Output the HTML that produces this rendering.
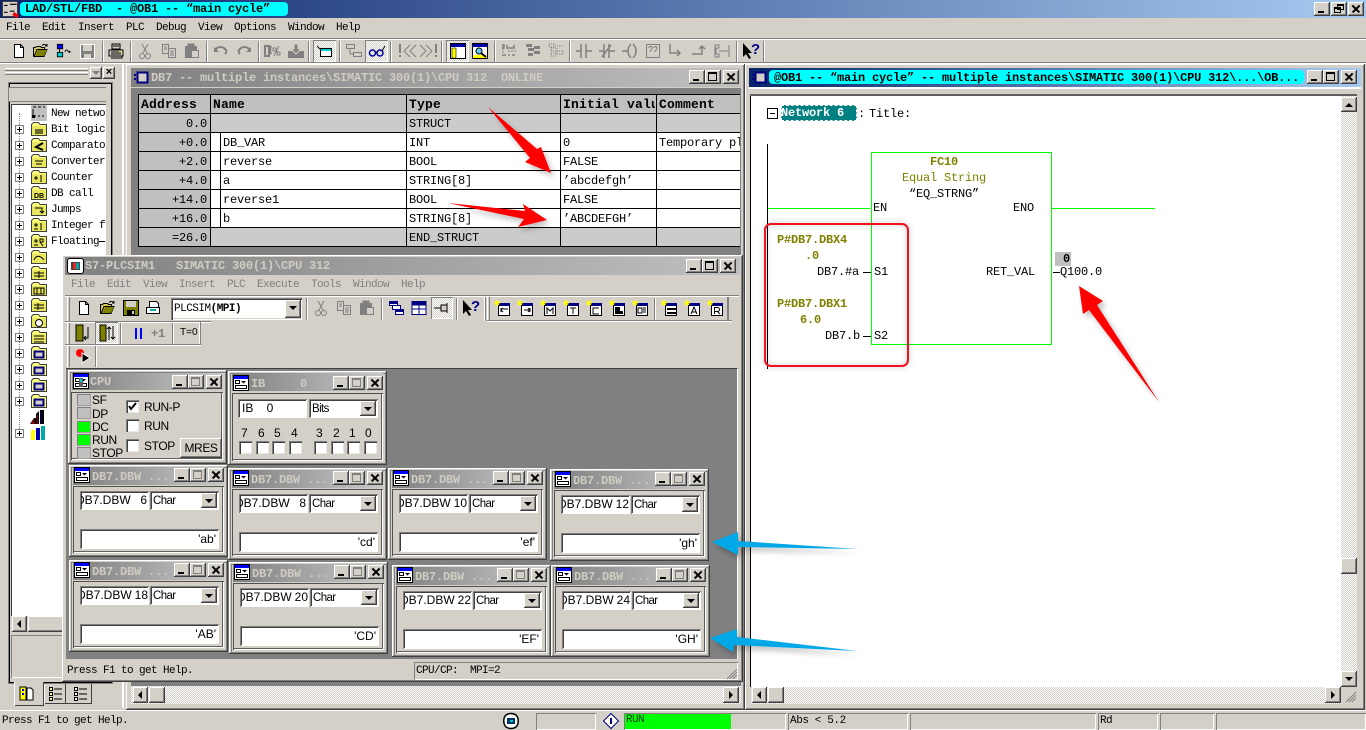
<!DOCTYPE html>
<html><head><meta charset="utf-8"><title>LAD/STL/FBD</title>
<style>
html,body{margin:0;padding:0}
body{width:1366px;height:730px;position:relative;overflow:hidden;background:#d4d0c8;font:12px "Liberation Mono",monospace;color:#000}
div,span,i,b,svg{position:absolute;display:block;box-sizing:border-box;font-style:normal}
.m{font:11px "Liberation Mono",monospace;letter-spacing:-.6px;white-space:pre;line-height:14px}
.n{font:12px "Liberation Mono",monospace;letter-spacing:-.2px;white-space:pre;line-height:14px}
.h{font:bold 13px "Liberation Mono",monospace;letter-spacing:.2px;white-space:pre;line-height:16px}
.bt{font:bold 12px "Liberation Mono",monospace;letter-spacing:-.2px;white-space:pre;line-height:14px}
.ar{font:12px "Liberation Sans",sans-serif;white-space:pre;line-height:14px}
.ol{color:#808000}
.r{box-shadow:inset -1px -1px #404040,inset 1px 1px #fff,inset -2px -2px #808080;background:#d4d0c8}
.s{box-shadow:inset 1px 1px #808080,inset 2px 2px #404040,inset -1px -1px #fff,inset -2px -2px #d4d0c8;background:#fff}
.f{box-shadow:inset 1px 1px #808080,inset -1px -1px #fff,inset 2px 2px #404040}
.d{background:repeating-conic-gradient(#fff 0 25%,#d4d0c8 0 50%) 0 0/2px 2px}
.b{width:16px;height:14px;background:#d4d0c8;box-shadow:inset -1px -1px #404040,inset 1px 1px #fff,inset -2px -2px #808080}
.mn:after{content:"";position:absolute;left:4px;top:9px;width:6px;height:2px;background:#000}
.mx:after{content:"";position:absolute;left:3px;top:2px;width:9px;height:9px;border:1px solid #000;border-top-width:2px;box-sizing:border-box}
.mg:after{content:"";position:absolute;left:3px;top:2px;width:9px;height:9px;border:1px solid #808080;border-top-width:2px;box-sizing:border-box}
.cl:before,.cl:after{content:"";position:absolute;left:3px;top:6px;width:10px;height:1.6px;background:#000;transform:rotate(45deg)}
.cl:after{transform:rotate(-45deg)}
.up:after,.dn:after,.lf:after,.rt:after{content:"";position:absolute;width:0;height:0;border:4px solid transparent}
.up:after{left:4px;top:2px;border-bottom-color:#000}
.dn:after{left:4px;top:6px;border-top-color:#000}
.lf:after{left:1px;top:4px;border-right-color:#000}
.rt:after{left:6px;top:4px;border-left-color:#000}
.vl{width:1px;background:#000}.hl{height:1px;background:#000}
.gr{background:#c0c0c0}.lg{background:#cbcbcb}
.sep{width:2px;height:22px;background:linear-gradient(90deg,#808080 50%,#fff 50%)}
.i{width:16px;height:16px;overflow:visible}
.plus{width:9px;height:9px;border:1px solid #808080;background:#fff;left:15px}
.plus:after{content:"";position:absolute;left:1px;top:3px;width:5px;height:1px;background:#000}
.plus:before{content:"";position:absolute;left:3px;top:1px;width:1px;height:5px;background:#000}
.w{width:159px;height:92px;background:#d4d0c8;box-shadow:inset -1px -1px #404040,inset 1px 1px #fff,inset -2px -2px #808080,inset 2px 2px #d4d0c8,inset 3px 3px #808080}
.w .tb{left:4px;top:2px;width:151px;height:18px;background:linear-gradient(90deg,#808080,#c8c8c8)}
.w .tt{left:23px;top:5px;color:#d0ccc4}
.w .cli{left:4px;top:21px;width:151px;height:67px;box-shadow:inset 1px 1px #505050,inset -1px -1px #fff,inset -2px -2px #606060}
.w .a{left:11px;top:26px;width:69px;height:19px;overflow:hidden}
.w .c{left:81px;top:26px;width:69px;height:19px}
.w .v{left:11px;top:64px;width:139px;height:20px}
.a .ar{top:2px!important}
.a .ar:first-child{clip-path:inset(0 0 0 5px)}
.c .ar,.ch{font-size:11.5px;letter-spacing:-.6px;top:3px}
.cb{width:16px;height:15px;right:2px;top:2px}
.cb:after{content:"";position:absolute;left:4px;top:6px;border:4px solid transparent;border-top-color:#000}
.led{left:9px;width:14px;height:12px;background:#c0c0c0;border:1px solid #808080;border-right-color:#a0a0a0;border-bottom-color:#a0a0a0}
.lb{letter-spacing:-.4px}
.ck2{width:13px;height:13px;background:#fff;box-shadow:inset 1px 1px #808080,inset 2px 2px #404040,inset -1px -1px #e8e8e8}
</style></head><body>

<svg width="0" height="0" style="position:absolute">
<defs>
<symbol id="new" viewBox="0 0 16 16"><path d="M3.500 1.500h6l3 3v10h-9z" fill="#fff" stroke="#000"/><path d="M9.500 1.500v3h3" fill="none" stroke="#000"/></symbol>
<symbol id="open" viewBox="0 0 16 16"><path d="M.5 13.500v-9h2l1-1h4l1 1h3v2H4l-3 7h10l3-7H4" fill="#d8c860" stroke="#000"/><path d="M2 13l3-6h9l-3 6z" fill="#808000"/><path d="M9 2.500c1.500-1.500 3.500-1.500 5 .5m0-2v2h-2" fill="none" stroke="#000"/></symbol>
<symbol id="sv" viewBox="0 0 16 16"><path d="M.5.500h15v15h-15z" fill="#808000" stroke="#000"/><path d="M3 1h10v6H3z" fill="#d4d0c8"/><path d="M4 10h8v5H4z" fill="#000"/><path d="M9 11h2v3H9z" fill="#d4d0c8"/></symbol>
<symbol id="svg" viewBox="0 0 16 16"><path d="M.5.500h14v14h-14z" fill="#808080" stroke="#fff"/><path d="M3 1h9v6H3z" fill="#d4d0c8"/><path d="M4 10h7v4H4z" fill="#d4d0c8"/></symbol>
<symbol id="pr" viewBox="0 0 16 16"><path d="M4 1h8v5H4zM1 7h14v6H1z" fill="#d4d0c8" stroke="#000"/><path d="M3 9h10M3 11h10M5 3h6M4 13h10v2H3" fill="none" stroke="#000"/><path d="M11 8h2v1h-2z" fill="#ff0"/></symbol>
<symbol id="cut" viewBox="0 0 16 16"><path d="M5 1l5 9M11 1L6 10" stroke="#808080" fill="none"/><circle cx="5" cy="13" r="2.500" fill="none" stroke="#808080"/><circle cx="11" cy="13" r="2.500" fill="none" stroke="#808080"/></symbol>
<symbol id="cp" viewBox="0 0 16 16"><path d="M1.500 1.500h6v9h-6zM7.500 5.500h7v9h-7z" fill="#d4d0c8" stroke="#808080"/><path d="M3 4h3M3 6h3M9 8h4M9 10h4M9 12h4" stroke="#808080"/></symbol>
<symbol id="pa" viewBox="0 0 16 16"><path d="M1.500 3.500h11v11h-11z" fill="#808080" stroke="#808080"/><path d="M4 1h6v4H4z" fill="#808080" stroke="#808080"/><path d="M7.500 7.500h7v7h-7z" fill="#d4d0c8" stroke="#808080"/></symbol>
<symbol id="und" viewBox="0 0 16 16"><path d="M2 7c3-4 8-4 11 0 1 2 0 3-1 4" fill="none" stroke="#808080" stroke-width="2"/><path d="M1 4v5h5z" fill="#808080"/></symbol>
<symbol id="red" viewBox="0 0 16 16"><path d="M14 7c-3-4-8-4-11 0-1 2 0 3 1 4" fill="none" stroke="#808080" stroke-width="2"/><path d="M15 4v5h-5z" fill="#808080"/></symbol>
<symbol id="gm" viewBox="0 0 18 16"><path d="M1 3h4v10H1zM7 3c-2 4 0 8 0 8" fill="none" stroke="#808080" stroke-width="2"/><path d="M9 5h3v3H9zM13 9h3v3h-3zM15 3l-5 10" fill="none" stroke="#808080"/></symbol>
<symbol id="dl" viewBox="0 0 18 16"><path d="M1 8h16v7H1z" fill="#808080"/><path d="M7 1h4v5h3l-5 5-5-5h3z" fill="#808080" stroke="#d4d0c8"/></symbol>
<symbol id="mon" viewBox="0 0 16 14"><path d="M3.500 3.500h11v8h-11z" fill="#fff" stroke="#000"/><path d="M4 4h10v2H4z" fill="#0cc"/><path d="M0 1l4 4" stroke="#000"/></symbol>
<symbol id="netw" viewBox="0 0 18 16"><path d="M1.500 1.500h8v4h-8zM8.500 9.500h8v4h-8z" fill="#d4d0c8" stroke="#808080"/><path d="M5 6v5h3" stroke="#808080" fill="none"/></symbol>
<symbol id="gl" viewBox="0 0 18 16"><circle cx="4.500" cy="10" r="3" fill="none" stroke="#00a" stroke-width="1.500"/><circle cx="12" cy="10" r="3" fill="none" stroke="#00a" stroke-width="1.500"/><path d="M7 9h2.500M14 8l3-5" stroke="#000"/></symbol>
<symbol id="ex1" viewBox="0 0 20 16"><path d="M3 1v9M3 12v2" stroke="#808080" stroke-width="2"/><path d="M13 2L7 8l6 6M19 2l-6 6 6 6" fill="none" stroke="#808080"/></symbol>
<symbol id="ex2" viewBox="0 0 20 16"><path d="M17 1v9M17 12v2" stroke="#808080" stroke-width="2"/><path d="M7 2l6 6-6 6M1 2l6 6-6 6" fill="none" stroke="#808080"/></symbol>
<symbol id="pane" viewBox="0 0 16 16"><path d="M.5.500h15v15h-15z" fill="#fff" stroke="#000"/><path d="M1 1h14v3H1z" fill="#00a"/><path d="M2 5h4v10H2z" fill="#ff0" stroke="#000" stroke-width=".6"/></symbol>
<symbol id="zoomw" viewBox="0 0 16 16"><path d="M.5.500h15v15h-15z" fill="#fff" stroke="#000"/><path d="M1 1h14v3H1z" fill="#00a"/><path d="M1 12h14v3H1z" fill="#ff0"/><circle cx="7" cy="8" r="3" fill="#6cf" stroke="#000"/><path d="M9 10l5 4" stroke="#000" stroke-width="2"/></symbol>
<symbol id="q1" viewBox="0 0 16 16"><path d="M0 2h2v3H0zM5 2v3h7V2M0 12h4M6 12h2M10 12h3" stroke="#808080" fill="none" stroke-width="1.500"/><path d="M1 5v6M6 8h8" stroke="#808080" stroke-dasharray="2 1"/></symbol>
<symbol id="q2" viewBox="0 0 16 16"><path d="M1 1h6v3H1zM9 3h6v3H9zM9 8h6v3H9zM3 5h6v3H3zM3 10h5v3H3z" fill="#808080"/></symbol>
<symbol id="q3" viewBox="0 0 16 16"><path d="M1 1h6v3H1zM9 3h6M9 8h6v3H9zM3 5h6v3H3zM3 10h5v3H3z" fill="none" stroke="#808080" stroke-dasharray="1 1"/></symbol>
<symbol id="no" viewBox="0 0 16 16"><path d="M0 8h5M5 1v14M10 1v14M10 8h6" stroke="#808080" stroke-width="1.500" fill="none"/></symbol>
<symbol id="nc" viewBox="0 0 16 16"><path d="M0 8h5M5 1v14M10 1v14M10 8h6M3 14L12 2" stroke="#808080" stroke-width="1.500" fill="none"/></symbol>
<symbol id="co" viewBox="0 0 16 16"><path d="M0 8h6M9 1c-4 4-4 10 0 14M11 1c4 4 4 10 0 14" stroke="#808080" stroke-width="1.500" fill="none"/></symbol>
<symbol id="bx" viewBox="0 0 16 16"><path d="M1.500 1.500h13v13h-13z" fill="none" stroke="#808080"/><path d="M4 5c0-2 3-2 3 0s-2 2-2 4M9 5c0-2 3-2 3 0s-2 2-2 4" fill="none" stroke="#808080"/></symbol>
<symbol id="brd" viewBox="0 0 16 16"><path d="M2 1v9h10M9 7l3 3-3 3" fill="none" stroke="#808080" stroke-width="1.500"/></symbol>
<symbol id="bru" viewBox="0 0 16 16"><path d="M1 11h10V3M8 6l3-3 3 3" fill="none" stroke="#808080" stroke-width="1.500"/></symbol>
<symbol id="brc" viewBox="0 0 16 16"><path d="M1 2h4v3H2v6h3v3H1zM15 2v12M5 8h10" fill="none" stroke="#808080"/></symbol>
<symbol id="hlp" viewBox="0 0 18 16"><path d="M1 0v14l3-3 3 5 2-1-3-5h4z" fill="#000"/><text x="9" y="11" font-family="Liberation Sans" font-weight="bold" font-size="15" fill="#00008b">?</text></symbol>
<symbol id="fold" viewBox="0 0 16 16"><path d="M.5 14.500v-11l2-2h5l1.500 2h6.500v11z" fill="#ffff80" stroke="#404040"/><path d="M1 5h14v9H1z" fill="#e8e860"/></symbol>
<symbol id="blk" viewBox="0 0 16 16"><path d="M.5 14.500v-11l2-2h5l1.500 2h6.500v11z" fill="#ffff80" stroke="#404040"/><path d="M3.500 6.500h9v6h-9z" fill="#d4d0c8" stroke="#000080" stroke-width="2"/></symbol>
<symbol id="mini" viewBox="0 0 16 16"><path d="M.5.500h15v15H.5z" fill="#fff" stroke="#000"/><path d="M1 1h14v3H1z" fill="#00f"/><path d="M2.500 5.500h4v3h-4zM2.500 10.500h11v3h-11z" fill="#fff" stroke="#000"/><path d="M8 6h5l-2.500 2.500z" fill="#000"/></symbol>
<symbol id="nw" viewBox="0 0 16 16"><path d="M4.500 3.500h11v12h-11z" fill="#fff" stroke="#000"/><path d="M5 3h11v3H5z" fill="#000080"/><path d="M3 0v6M0 3h6M1 1l4 4M5 1L1 5" stroke="#ff0"/></symbol>
</defs>
</svg>

<!-- main title -->
<div style="left:0;top:0;width:1366px;height:18px;background:linear-gradient(90deg,#0a246a,#a6caf0)"></div>
<div style="left:2px;top:1px;width:16px;height:16px;background:#d4d0c8;border:1px solid #404040"><svg class="i" style="left:0;top:0" width="14" height="14" viewBox="0 0 14 14"><path d="M1 3h3M1 9h3M6 2h6M6 8h4" stroke="#000" fill="none"/><path d="M9 10l4 3" stroke="#e00" stroke-width="3"/></svg></div>
<div style="left:20px;top:2px;width:268px;height:14px;background:#0ff;border-radius:4px"></div>
<div class="bt" style="left:25px;top:2px">LAD/STL/FBD  - @OB1 -- “main cycle”</div>
<div class="b mn" style="left:1314px;top:2px"></div>
<div class="b" style="left:1331px;top:2px"><span style="left:3px;top:5px;width:7px;height:6px;border:1px solid #000;border-top-width:2px;background:#d4d0c8"></span><span style="left:6px;top:2px;width:7px;height:6px;border:1px solid #000;border-top-width:2px"></span></div>
<div class="b cl" style="left:1348px;top:2px"></div>

<!-- menu -->
<div class="m" style="left:6px;top:21px">File</div>
<div class="m" style="left:42px;top:21px">Edit</div>
<div class="m" style="left:78px;top:21px">Insert</div>
<div class="m" style="left:126px;top:21px">PLC</div>
<div class="m" style="left:156px;top:21px">Debug</div>
<div class="m" style="left:198px;top:21px">View</div>
<div class="m" style="left:234px;top:21px">Options</div>
<div class="m" style="left:288px;top:21px">Window</div>
<div class="m" style="left:336px;top:21px">Help</div>
<div style="left:0;top:38px;width:1366px;height:2px;background:linear-gradient(#808080 50%,#fff 50%)"></div>

<!-- main toolbar -->
<svg class="i" style="left:11px;top:43px"><use href="#new"/></svg>
<svg class="i" style="left:33px;top:43px"><use href="#open"/></svg>
<svg class="i" style="left:56px;top:43px" viewBox="0 0 18 16"><path d="M1.500.500h6v5h-6z" fill="#00f" stroke="#000"/><path d="M1.500 9.500h6v5h-6z" fill="#0cc" stroke="#000"/><path d="M4 6v3M10 9c1-3 3-3 4 0l2 0m-1-1l1 1-1 1" fill="none" stroke="#000"/></svg>
<svg class="i" style="left:80px;top:44px"><use href="#svg"/></svg>
<div class="sep" style="left:102px;top:41px"></div>
<svg class="i" style="left:108px;top:43px"><use href="#pr"/></svg>
<div class="sep" style="left:130px;top:41px"></div>
<svg class="i" style="left:137px;top:43px"><use href="#cut"/></svg>
<svg class="i" style="left:161px;top:43px"><use href="#cp"/></svg>
<svg class="i" style="left:184px;top:43px"><use href="#pa"/></svg>
<div class="sep" style="left:206px;top:41px"></div>
<svg class="i" style="left:213px;top:43px"><use href="#und"/></svg>
<svg class="i" style="left:236px;top:43px"><use href="#red"/></svg>
<div class="sep" style="left:258px;top:41px"></div>
<svg class="i" style="left:264px;top:43px;width:18px"><use href="#gm"/></svg>
<svg class="i" style="left:287px;top:43px;width:18px"><use href="#dl"/></svg>
<div class="sep" style="left:308px;top:41px"></div>
<div class="d" style="left:313px;top:40px;width:23px;height:22px;box-shadow:inset 1px 1px #808080,inset -1px -1px #fff"></div>
<svg class="i" style="left:317px;top:44px"><use href="#mon"/></svg>
<div class="sep" style="left:339px;top:41px"></div>
<svg class="i" style="left:345px;top:43px;width:18px"><use href="#netw"/></svg>
<div class="d" style="left:365px;top:40px;width:23px;height:22px;box-shadow:inset 1px 1px #808080,inset -1px -1px #fff"></div>
<svg class="i" style="left:368px;top:43px;width:18px"><use href="#gl"/></svg>
<div class="sep" style="left:390px;top:41px"></div>
<svg class="i" style="left:397px;top:43px;width:20px"><use href="#ex1"/></svg>
<svg class="i" style="left:419px;top:43px;width:20px"><use href="#ex2"/></svg>
<div class="sep" style="left:441px;top:41px"></div>
<div class="d" style="left:446px;top:40px;width:23px;height:22px;box-shadow:inset 1px 1px #808080,inset -1px -1px #fff"></div>
<svg class="i" style="left:450px;top:43px"><use href="#pane"/></svg>
<svg class="i" style="left:472px;top:43px"><use href="#zoomw"/></svg>
<div class="sep" style="left:494px;top:41px"></div>
<svg class="i" style="left:502px;top:43px"><use href="#q1"/></svg>
<svg class="i" style="left:525px;top:43px"><use href="#q2"/></svg>
<svg class="i" style="left:548px;top:43px"><use href="#q3"/></svg>
<div class="sep" style="left:569px;top:41px"></div>
<svg class="i" style="left:576px;top:43px"><use href="#no"/></svg>
<svg class="i" style="left:599px;top:43px"><use href="#nc"/></svg>
<svg class="i" style="left:622px;top:43px"><use href="#co"/></svg>
<svg class="i" style="left:645px;top:43px"><use href="#bx"/></svg>
<svg class="i" style="left:668px;top:43px"><use href="#brd"/></svg>
<svg class="i" style="left:691px;top:43px"><use href="#bru"/></svg>
<svg class="i" style="left:714px;top:43px"><use href="#brc"/></svg>
<div class="sep" style="left:736px;top:41px"></div>
<svg class="i" style="left:742px;top:43px;width:18px"><use href="#hlp"/></svg>
<div class="sep" style="left:763px;top:41px"></div>
<div style="left:0;top:62px;width:1366px;height:2px;background:linear-gradient(#808080 50%,#fff 50%)"></div>

<!-- left dock -->
<div style="left:5px;top:68px;width:83px;height:3px;box-shadow:inset 0 1px #fff,inset 0 -1px #808080"></div>
<div style="left:5px;top:72px;width:83px;height:3px;box-shadow:inset 0 1px #fff,inset 0 -1px #808080"></div>
<div class="r" style="left:90px;top:67px;width:12px;height:12px"><span style="left:2px;top:4px;border:4px solid transparent;border-top-color:#808080"></span></div>
<div class="r" style="left:103px;top:67px;width:12px;height:12px;font:bold 11px 'Liberation Sans';line-height:11px;text-align:center">×</div>
<div style="left:8px;top:82px;width:105px;height:602px;border:1px solid #808080;box-shadow:inset 1px 1px #000,inset -1px -1px #000"></div>
<div style="left:9px;top:87px;width:97px;height:15px;background:#d4d0c8;border-top:1px solid #808080;border-bottom:1px solid #808080"></div>
<div style="left:11px;top:104px;width:95px;height:512px;background:#fff;border-left:1px solid #404040;border-top:1px solid #404040"></div>
<div style="left:13px;top:105px;width:92px;height:344px;overflow:hidden">
<div style="left:0;top:8px;width:92px;height:336px">
<div style="left:6px;top:0;width:1px;height:322px;border-left:1px dotted #808080"></div>
<svg class="i" style="left:18px;top:-8px"><path d="M0 0h16v16H0z" fill="#c0c0c0"/><path d="M2 2h3M7 2h3M12 2h2M2 4v6M2 11h3M7 11h2M11 11h2" stroke="#000"/><path d="M1 10h3v3H1z"/></svg>
<div class="m" style="left:38px;top:-6px">New netwo</div>
<div class="m" style="left:38px;top:10px">Bit logic</div>
<div class="m" style="left:38px;top:26px">Comparato</div>
<div class="m" style="left:38px;top:42px">Converter</div>
<div class="m" style="left:38px;top:58px">Counter</div>
<div class="m" style="left:38px;top:74px">DB call</div>
<div class="m" style="left:38px;top:90px">Jumps</div>
<div class="m" style="left:38px;top:106px">Integer f</div>
<div class="m" style="left:38px;top:122px">Floating</div>
<div class="hl" style="left:86px;top:128px;width:6px"></div>
<svg class="i" style="left:18px;top:8px"><use href="#fold"/><path d="M4 8h8v5H4z" fill="#000" opacity=".55"/></svg>
<svg class="i" style="left:18px;top:24px"><use href="#fold"/><path d="M12 6L5 10l7 3" fill="none" stroke="#000" stroke-width="2"/></svg>
<svg class="i" style="left:18px;top:40px"><use href="#fold"/><path d="M4 8h8M5 11h6" stroke="#000"/></svg>
<svg class="i" style="left:18px;top:56px"><use href="#fold"/><path d="M3 9h4M5 7v4M10 6v7" stroke="#000"/></svg>
<svg class="i" style="left:18px;top:72px"><use href="#fold"/><text x="3" y="13" font-size="7" font-weight="bold" font-family="Liberation Sans">DB</text></svg>
<svg class="i" style="left:18px;top:88px"><use href="#fold"/><path d="M4 7h7v5M9 10l2 2 2-2" fill="none" stroke="#000"/></svg>
<svg class="i" style="left:18px;top:104px"><use href="#fold"/><path d="M3 8h4M5 6v4M3 12h4M10 6v7" stroke="#000"/></svg>
<svg class="i" style="left:18px;top:120px"><use href="#fold"/><path d="M3 8h4M5 6v4M3 12h4M9 6h3v3h-3zM9 9l3 4" stroke="#000" fill="none"/></svg>
<svg class="i" style="left:18px;top:136px"><use href="#fold"/><path d="M3 11c2-5 6-5 10 0" fill="none" stroke="#000"/></svg>
<svg class="i" style="left:18px;top:152px"><use href="#fold"/><path d="M3 8h10M3 11h10M8 6v7" stroke="#000"/></svg>
<svg class="i" style="left:18px;top:168px"><use href="#fold"/><path d="M3 7h10v6H3zM6 7v6M10 7v6" fill="none" stroke="#000"/></svg>
<svg class="i" style="left:18px;top:184px"><use href="#fold"/><path d="M3 8h10M3 11h10M7 6v7" stroke="#000"/></svg>
<svg class="i" style="left:18px;top:200px"><use href="#fold"/><circle cx="8" cy="10" r="3.500" fill="#fff" stroke="#000"/></svg>
<svg class="i" style="left:18px;top:216px"><use href="#fold"/><path d="M3 7h10M3 10h10M3 13h10" stroke="#000"/></svg>
<svg class="i" style="left:18px;top:232px"><use href="#blk"/></svg>
<svg class="i" style="left:18px;top:248px"><use href="#blk"/></svg>
<svg class="i" style="left:18px;top:264px"><use href="#blk"/></svg>
<svg class="i" style="left:18px;top:280px"><use href="#blk"/></svg>
<svg class="i" style="left:17px;top:296px"><path d="M0 15l4-6h2v6zM6 15V5l3-3v13zM10 15V1h4v14z" fill="#000"/><path d="M1 15l3-5 1 5zM7 15V6h1v9z" fill="#800"/><path d="M11 15V2h1v13z" fill="#006"/></svg>
<svg class="i" style="left:17px;top:312px"><path d="M1 5h4v10H1z" fill="#ff0"/><path d="M6 3h4v12H6z" fill="#00a"/><path d="M11 1h4v14h-4z" fill="#0aa"/></svg>
</div></div>
<div class="plus" style="top:125px;left:15px"></div><div class="plus" style="top:141px"></div><div class="plus" style="top:157px"></div><div class="plus" style="top:173px"></div><div class="plus" style="top:189px"></div><div class="plus" style="top:205px"></div><div class="plus" style="top:221px"></div><div class="plus" style="top:237px"></div><div class="plus" style="top:253px"></div><div class="plus" style="top:269px"></div><div class="plus" style="top:285px"></div><div class="plus" style="top:301px"></div><div class="plus" style="top:317px"></div><div class="plus" style="top:333px"></div><div class="plus" style="top:349px"></div><div class="plus" style="top:365px"></div><div class="plus" style="top:381px"></div><div class="plus" style="top:397px"></div><div class="plus" style="top:429px"></div>
<div style="left:11px;top:616px;width:95px;height:16px;background:#d4d0c8"></div>
<div class="b lf" style="left:12px;top:616px;width:15px;height:16px"></div>
<div class="r" style="left:28px;top:616px;width:40px;height:16px"></div>
<div style="left:11px;top:635px;width:95px;height:43px;box-shadow:inset 1px 1px #808080,inset -1px -1px #fff"></div>
<!-- tabs -->
<div style="left:14px;top:682px;width:30px;height:24px;background:#d4d0c8;box-shadow:inset 1px 0 #fff,inset -1px -1px #404040"></div>
<svg class="i" style="left:19px;top:686px"><path d="M1 1h6v13H1z" fill="#ff0" stroke="#000"/><path d="M3 3h2v2H3zM3 7h2v2H3z" fill="#00f"/><path d="M8 2h4l2 2v10H8z" fill="#fff" stroke="#000"/></svg>
<div style="left:44px;top:684px;width:22px;height:20px;background:#d4d0c8;box-shadow:inset 1px 0 #fff,inset -1px -1px #404040"></div>
<svg class="i" style="left:48px;top:686px"><path d="M1.500 1.500h3v3h-3zM1.500 6.500h3v3h-3zM1.500 11.500h3v3h-3zM6 3h8M6 8h8M6 13h8" fill="#ff8" stroke="#000"/></svg>
<div style="left:66px;top:684px;width:26px;height:20px;background:#d4d0c8;box-shadow:inset -1px -1px #404040"></div>
<svg class="i" style="left:73px;top:686px"><path d="M1.500 1.500h3v3h-3zM1.500 6.500h3v3h-3zM1.500 11.500h3v3h-3zM6 3h8M6 8h8M6 13h8" fill="#fff" stroke="#000"/></svg>

<!-- DB7 window -->
<div style="left:122px;top:63px;width:2px;height:645px;background:#fff"></div>
<div class="r" style="left:126px;top:64px;width:619px;height:646px"></div>
<div style="left:131px;top:68px;width:610px;height:19px;background:linear-gradient(90deg,#808080,#c0c0c0)"></div>
<svg class="i" style="left:134px;top:70px"><path d="M3.500 2.500h10v10h-10z" fill="#d4d0c8" stroke="#000080" stroke-width="2"/><path d="M0 5h2M0 9h2" stroke="#000080" stroke-width="2"/></svg>
<div class="bt" style="left:151px;top:71px;color:#d0ccc4">DB7 -- multiple instances\SIMATIC 300(1)\CPU 312  ONLINE</div>
<div class="b mn" style="left:689px;top:70px"></div><div class="b mx" style="left:705px;top:70px"></div><div class="b cl" style="left:723px;top:70px"></div>
<div style="left:131px;top:88px;width:610px;height:598px;background:#808080"></div>
<div style="left:138px;top:94px;width:602px;height:153px;background:#fff;overflow:hidden">
 <div class="gr" style="left:0;top:0;width:602px;height:19px"></div>
 <div class="gr" style="left:0;top:19px;width:73px;height:133px"></div>
 <div class="lg" style="left:73px;top:19px;width:529px;height:19px"></div>
 <div class="lg" style="left:73px;top:133px;width:529px;height:19px"></div>
 <div class="vl" style="left:0;top:0;height:153px"></div>
 <div class="vl" style="left:72px;top:0;height:153px"></div>
 <div class="vl" style="left:268px;top:0;height:153px"></div>
 <div class="vl" style="left:422px;top:0;height:153px"></div>
 <div class="vl" style="left:518px;top:0;height:153px"></div>
 <div class="vl" style="left:82px;top:38px;height:95px"></div>
 <div class="hl" style="left:0;top:0;width:602px"></div><div class="hl" style="left:0;top:19px;width:602px"></div><div class="hl" style="left:0;top:38px;width:602px"></div><div class="hl" style="left:0;top:57px;width:602px"></div><div class="hl" style="left:0;top:76px;width:602px"></div><div class="hl" style="left:0;top:95px;width:602px"></div><div class="hl" style="left:0;top:114px;width:602px"></div><div class="hl" style="left:0;top:133px;width:602px"></div><div class="hl" style="left:0;top:152px;width:602px"></div>
 <div class="h" style="left:3px;top:3px">Address</div><div class="h" style="left:75px;top:3px">Name</div><div class="h" style="left:271px;top:3px">Type</div><div class="h" style="left:425px;top:3px;width:92px;overflow:hidden">Initial value</div><div class="h" style="left:521px;top:3px">Comment</div>
 <div class="n" style="right:533px;top:23px">0.0</div><div class="n" style="left:271px;top:23px">STRUCT</div>
 <div class="n" style="right:533px;top:42px">+0.0</div><div class="n" style="left:85px;top:42px">DB_VAR</div><div class="n" style="left:271px;top:42px">INT</div><div class="n" style="left:425px;top:42px">0</div><div class="n" style="left:521px;top:42px">Temporary place holder</div>
 <div class="n" style="right:533px;top:61px">+2.0</div><div class="n" style="left:85px;top:61px">reverse</div><div class="n" style="left:271px;top:61px">BOOL</div><div class="n" style="left:425px;top:61px">FALSE</div>
 <div class="n" style="right:533px;top:80px">+4.0</div><div class="n" style="left:85px;top:80px">a</div><div class="n" style="left:271px;top:80px">STRING[8]</div><div class="n" style="left:425px;top:80px">’abcdefgh’</div>
 <div class="n" style="right:533px;top:99px">+14.0</div><div class="n" style="left:85px;top:99px">reverse1</div><div class="n" style="left:271px;top:99px">BOOL</div><div class="n" style="left:425px;top:99px">FALSE</div>
 <div class="n" style="right:533px;top:118px">+16.0</div><div class="n" style="left:85px;top:118px">b</div><div class="n" style="left:271px;top:118px">STRING[8]</div><div class="n" style="left:425px;top:118px">’ABCDEFGH’</div>
 <div class="n" style="right:533px;top:137px">=26.0</div><div class="n" style="left:271px;top:137px">END_STRUCT</div>
</div>
<div style="left:131px;top:686px;width:610px;height:18px" class="d"></div>
<div class="b lf" style="left:133px;top:687px;width:15px;height:16px"></div>
<div class="r" style="left:149px;top:687px;width:16px;height:16px"></div>
<div class="b rt" style="left:723px;top:687px;width:16px;height:16px"></div>

<!-- right window -->
<div class="r" style="left:745px;top:64px;width:620px;height:646px"></div>
<div style="left:749px;top:68px;width:612px;height:19px;background:linear-gradient(90deg,#0a246a,#a6caf0)"></div>
<svg class="i" style="left:752px;top:70px"><path d="M3.500 2.500h10v10h-10z" fill="#d4d0c8" stroke="#000080" stroke-width="2"/><path d="M0 5h2M0 9h2" stroke="#000080" stroke-width="2"/></svg>
<div style="left:769px;top:70px;width:535px;height:14px;background:#0ff;border-radius:4px"></div>
<div class="bt" style="left:774px;top:71px">@OB1 -- “main cycle” -- multiple instances\SIMATIC 300(1)\CPU 312\...\OB...</div>
<div class="b mn" style="left:1307px;top:70px"></div><div class="b mx" style="left:1323px;top:70px"></div><div class="b cl" style="left:1341px;top:70px"></div>
<div style="left:749px;top:87px;width:612px;height:2px;background:#fff"></div>
<div style="left:750px;top:94px;width:607px;height:2px;background:#606060"></div>
<div style="left:750px;top:96px;width:591px;height:591px;background:#fff;border-left:1px solid #000"></div>
<div class="d" style="left:1341px;top:96px;width:16px;height:591px"></div>
<div class="b up" style="left:1341px;top:97px;width:16px;height:15px"></div>
<div class="r" style="left:1341px;top:558px;width:16px;height:16px"></div>
<div class="b dn" style="left:1341px;top:671px;width:16px;height:16px"></div>
<div class="d" style="left:751px;top:687px;width:590px;height:17px"></div>
<div class="b lf" style="left:752px;top:687px;width:15px;height:16px"></div>
<div class="r" style="left:768px;top:687px;width:16px;height:16px"></div>
<div class="b rt" style="left:1325px;top:687px;width:16px;height:16px"></div>
<svg style="left:1345px;top:691px;width:12px;height:12px"><path d="M11 1L1 11M11 4L4 11M11 7l-4 4" stroke="#808080" fill="none"/></svg>

<!-- network -->
<div style="left:767px;top:108px;width:11px;height:11px;border:1px solid #000;background:#fff"><span style="left:2px;top:4px;width:5px;height:1px;background:#000"></span></div>
<div class="bt" style="left:781px;top:105px;width:76px;height:16px;background:#008080;color:#fff;outline:1px dashed #fff;outline-offset:-1px;line-height:17px">Network 6</div>
<div class="n" style="left:858px;top:107px">:</div>
<div class="n" style="left:869px;top:107px">Title:</div>
<div class="vl" style="left:767px;top:144px;height:225px"></div>
<div style="left:871px;top:152px;width:181px;height:193px;border:1px solid #0f0"></div>
<div style="left:768px;top:208px;width:102px;height:1px;background:#0f0"></div>
<div style="left:1052px;top:208px;width:103px;height:1px;background:#0f0"></div>
<div class="bt ol" style="left:930px;top:155px">FC10</div>
<div class="n ol" style="left:902px;top:171px">Equal String</div>
<div class="n" style="left:909px;top:187px">“EQ_STRNG”</div>
<div class="n" style="left:873px;top:201px">EN</div>
<div class="n" style="left:1013px;top:201px">ENO</div>
<div class="bt ol" style="left:777px;top:233px">P#DB7.DBX4</div>
<div class="bt ol" style="left:805px;top:249px">.0</div>
<div class="n" style="left:817px;top:265px">DB7.#a</div>
<div class="hl" style="left:863px;top:272px;width:8px"></div>
<div class="n" style="left:874px;top:265px">S1</div>
<div class="n" style="left:986px;top:265px">RET_VAL</div>
<div style="left:1055px;top:252px;width:16px;height:14px;background:#c0c0c0"></div>
<div class="bt" style="left:1063px;top:252px">0</div>
<div class="hl" style="left:1053px;top:272px;width:7px"></div>
<div class="n" style="left:1060px;top:265px">Q100.0</div>
<div class="bt ol" style="left:777px;top:297px">P#DB7.DBX1</div>
<div class="bt ol" style="left:800px;top:313px">6.0</div>
<div class="n" style="left:825px;top:329px">DB7.b</div>
<div class="hl" style="left:863px;top:336px;width:8px"></div>
<div class="n" style="left:874px;top:329px">S2</div>

<!-- PLCSIM -->
<div style="left:62px;top:255px;width:681px;height:427px;background:#d4d0c8;box-shadow:inset -1px -1px #404040,inset 1px 1px #fff,inset -2px -2px #808080"></div>
<div style="left:65px;top:257px;width:675px;height:18px;background:linear-gradient(90deg,#808080,#c0c0c0)"></div>
<div style="left:67px;top:258px;width:17px;height:16px;background:#fff;border:1px solid #000;border-radius:3px"><span style="left:3px;top:3px;width:9px;height:8px;background:#444"></span><span style="left:5px;top:4px;width:3px;height:6px;background:#e22"></span><span style="left:8px;top:4px;width:3px;height:6px;background:#0aa"></span></div>
<div class="bt" style="left:85px;top:259px;color:#d0ccc4">S7-PLCSIM1   SIMATIC 300(1)\CPU 312</div>
<div class="b mn" style="left:686px;top:259px"></div><div class="b mx" style="left:702px;top:259px"></div><div class="b cl" style="left:720px;top:259px"></div>
<div class="m" style="left:71px;top:278px;color:#808080">File</div>
<div class="m" style="left:107px;top:278px;color:#808080">Edit</div>
<div class="m" style="left:143px;top:278px;color:#808080">View</div>
<div class="m" style="left:179px;top:278px;color:#808080">Insert</div>
<div class="m" style="left:227px;top:278px;color:#808080">PLC</div>
<div class="m" style="left:257px;top:278px;color:#808080">Execute</div>
<div class="m" style="left:311px;top:278px;color:#808080">Tools</div>
<div class="m" style="left:353px;top:278px;color:#808080">Window</div>
<div class="m" style="left:401px;top:278px;color:#808080">Help</div>
<div style="left:65px;top:295px;width:674px;height:2px;background:linear-gradient(#808080 50%,#fff 50%)"></div>
<div style="left:67px;top:297px;width:3px;height:24px;box-shadow:inset 1px 0 #fff,inset -1px 0 #808080"></div>
<svg class="i" style="left:76px;top:300px"><use href="#new"/></svg>
<svg class="i" style="left:100px;top:300px"><use href="#open"/></svg>
<svg class="i" style="left:123px;top:300px"><use href="#sv"/></svg>
<svg class="i" style="left:145px;top:300px"><path d="M4.500 1.500h7l2 2v5h-9z" fill="#fff" stroke="#000"/><path d="M1.500 7.500h13v6h-13z" fill="#fff" stroke="#000"/><path d="M5 10h6" stroke="#0aa" stroke-width="2"/></svg>
<div class="s" style="left:171px;top:298px;width:131px;height:22px"></div>
<div class="n" style="left:174px;top:302px;font-size:11px;letter-spacing:-.5px">PLCSIM<b style="position:static;display:inline">(MPI)</b></div>
<div class="r cb" style="left:285px;top:300px;width:16px;height:18px"></div>
<div class="sep" style="left:306px;top:298px"></div>
<svg class="i" style="left:313px;top:300px"><use href="#cut"/></svg>
<svg class="i" style="left:336px;top:300px"><use href="#cp"/></svg>
<svg class="i" style="left:359px;top:300px"><use href="#pa"/></svg>
<div class="sep" style="left:381px;top:298px"></div>
<svg class="i" style="left:388px;top:300px"><path d="M1.500 1.500h8v4h-8zM4.500 5.500h8v4h-8zM7.500 9.500h8v5h-8z" fill="#fff" stroke="#000080"/><path d="M2 2h8v2H2zM8 10h7v2H8z" fill="#000080"/></svg>
<svg class="i" style="left:411px;top:300px"><path d="M1 1.500h14v13H1z" fill="#fff" stroke="#000080"/><path d="M1 2h14v3H1zM8 2v13M1 9h14" stroke="#000080" fill="#000080"/></svg>
<div class="d" style="left:431px;top:297px;width:22px;height:22px;box-shadow:inset 1px 1px #808080,inset -1px -1px #fff"></div>
<svg class="i" style="left:434px;top:300px"><path d="M0 8h7M7 5h6v6H7zM13 3v10" stroke="#000" fill="#d4d0c8"/></svg>
<div class="sep" style="left:456px;top:298px"></div>
<svg class="i" style="left:462px;top:300px;width:18px"><use href="#hlp"/></svg>
<div style="left:484px;top:297px;width:2px;height:24px;background:#fff;border-right:1px solid #808080"></div>
<div style="left:487px;top:297px;width:3px;height:24px;box-shadow:inset 1px 0 #fff,inset -1px 0 #808080"></div>
<svg class="i" style="left:494px;top:300px"><use href="#nw"/><path d="M9 9h5M7 8v4M9 8l-2 2 2 2" stroke="#000" fill="none"/></svg>
<svg class="i" style="left:517px;top:300px"><use href="#nw"/><path d="M7 10h5M13 8v4M11 8l2 2-2 2" stroke="#000" fill="none"/></svg>
<svg class="i" style="left:540px;top:300px"><use href="#nw"/><path d="M7 14V8l3 3 3-3v6" stroke="#000" fill="none"/></svg>
<svg class="i" style="left:563px;top:300px"><use href="#nw"/><path d="M7 8h6M10 8v6" stroke="#000" fill="none"/></svg>
<svg class="i" style="left:586px;top:300px"><use href="#nw"/><path d="M13 8H7v6h6" stroke="#000" fill="none"/></svg>
<svg class="i" style="left:609px;top:300px"><use href="#nw"/><path d="M6.500 7.500h4v3h-4zM6.500 11.500h7v2h-7z" fill="#000" stroke="#000"/></svg>
<svg class="i" style="left:632px;top:300px"><use href="#nw"/><path d="M6 8h4v5H6zM11 8h3M11 10h3M11 12h3" fill="none" stroke="#000"/></svg>
<div class="sep" style="left:654px;top:298px"></div>
<svg class="i" style="left:661px;top:300px"><use href="#nw"/><path d="M6 8h9v2H6zM6 12h9v2H6z"/></svg>
<svg class="i" style="left:684px;top:300px"><use href="#nw"/><path d="M7 14l3-7 3 7M8 12h4" stroke="#000" fill="none"/></svg>
<svg class="i" style="left:707px;top:300px"><use href="#nw"/><path d="M7.500 14V7.500h3a2 2 0 010 4h-3M10 11l3 3" stroke="#000" fill="none"/></svg>
<div style="left:727px;top:297px;width:2px;height:24px;background:#808080"></div>
<div style="left:65px;top:321px;width:146px;height:2px;background:linear-gradient(#808080 50%,#fff 50%)"></div>
<div style="left:487px;top:320px;width:245px;height:2px;background:linear-gradient(#808080 50%,#fff 50%)"></div>
<!-- toolbar 2 -->
<div style="left:67px;top:323px;width:3px;height:21px;box-shadow:inset 1px 0 #fff,inset -1px 0 #808080"></div>
<svg class="i" style="left:75px;top:325px"><path d="M1 0h7v16H1z" fill="#808000" stroke="#000"/><path d="M13 2v11H9m2-2l-2 2 2 2" stroke="#000" fill="none"/></svg>
<div class="d" style="left:95px;top:322px;width:23px;height:22px;box-shadow:inset 1px 1px #808080,inset -1px -1px #fff"></div>
<svg class="i" style="left:99px;top:325px"><path d="M1 0h6v16H1z" fill="#808000" stroke="#000"/><path d="M10 15V2m-2 2l2-2 2 2M14 1v13m-2-2l2 2 2-2" stroke="#000" fill="none"/></svg>
<div class="sep" style="left:120px;top:323px"></div>
<div style="left:135px;top:328px;width:2px;height:11px;background:#00f"></div><div style="left:140px;top:328px;width:2px;height:11px;background:#00f"></div>
<div class="bt" style="left:151px;top:327px;color:#808080">+1</div>
<div class="sep" style="left:172px;top:323px"></div>
<div class="ar" style="left:180px;top:326px;font-size:10px">T=0</div>
<div style="left:199px;top:322px;width:2px;height:22px;background:#fff;border-right:1px solid #808080"></div>
<div style="left:65px;top:344px;width:136px;height:2px;background:linear-gradient(#808080 50%,#fff 50%)"></div>
<div style="left:67px;top:346px;width:3px;height:21px;box-shadow:inset 1px 0 #fff,inset -1px 0 #808080"></div>
<svg class="i" style="left:75px;top:348px"><circle cx="5" cy="5" r="4" fill="#f00"/><path d="M7 5v10l8-5z" fill="#000" stroke="#fff"/></svg>
<div style="left:95px;top:346px;width:2px;height:21px;background:#808080;border-right:1px solid #fff"></div>
<!-- MDI -->
<div style="left:66px;top:368px;width:672px;height:291px;background:#808080;border-top:1px solid #404040;border-right:1px solid #fff"></div>
<div class="m" style="left:67px;top:664px">Press F1 to get Help.</div>
<div style="left:414px;top:662px;width:324px;height:18px;box-shadow:inset 1px 1px #808080,inset -1px -1px #fff"></div>
<div class="m" style="left:416px;top:664px">CPU/CP:  MPI=2</div>
<svg style="left:726px;top:668px;width:12px;height:12px"><path d="M11 1L1 11M11 4L4 11M11 7l-4 4" stroke="#808080" fill="none"/></svg>

<!-- CPU -->
<div class="w" style="left:68px;top:370px;width:159px;height:94px">
 <div class="tb" style="top:3px;height:17px"></div>
 <svg class="i" style="left:5px;top:3px"><use href="#mini"/><path d="M6 5h4v9H6z" fill="#606060"/><path d="M7 6h2v3H7z" fill="#0cc"/></svg>
 <div class="bt tt" style="left:22px;top:5px">CPU</div>
 <div class="b mn" style="left:104px;top:5px"></div><div class="b mg" style="left:120px;top:5px"></div><div class="b cl" style="left:138px;top:5px"></div>
 <div class="cli" style="left:3px;top:22px;width:152px;height:68px"></div>
 <div class="led" style="top:24px"></div><div class="led" style="top:37px"></div><div class="led" style="top:51px;background:#0f0"></div><div class="led" style="top:64px;background:#0f0"></div><div class="led" style="top:77px"></div>
 <div class="ar lb" style="left:24px;top:23px">SF</div><div class="ar lb" style="left:24px;top:37px">DP</div><div class="ar lb" style="left:24px;top:50px">DC</div><div class="ar lb" style="left:24px;top:63px">RUN</div><div class="ar lb" style="left:24px;top:76px">STOP</div>
 <div class="ck2" style="left:58px;top:30px"><svg width="13" height="13" style="left:0;top:0"><path d="M3 6l2 3 5-6" fill="none" stroke="#000" stroke-width="2"/></svg></div><div class="ck2" style="left:58px;top:49px"></div><div class="ck2" style="left:58px;top:69px"></div>
 <div class="ar lb" style="left:76px;top:30px">RUN-P</div><div class="ar lb" style="left:76px;top:49px">RUN</div><div class="ar lb" style="left:76px;top:69px">STOP</div>
 <div class="r ar lb" style="left:112px;top:68px;width:42px;height:20px;text-align:center;line-height:20px">MRES</div>
</div>
<!-- IB -->
<div class="w" style="left:228px;top:371px;height:94px">
 <div class="tb" style="height:18px"></div>
 <svg class="i" style="left:5px;top:4px"><use href="#mini"/></svg>
 <div class="bt tt" style="left:23px;top:6px">IB</div><div class="bt tt" style="left:72px;top:6px">0</div>
 <div class="b mn" style="left:105px;top:5px"></div><div class="b mg" style="left:121px;top:5px"></div><div class="b cl" style="left:139px;top:5px"></div>
 <div class="cli" style="height:68px;top:22px"></div>
 <div class="f" style="left:10px;top:28px;width:69px;height:19px;background:#fff"></div><div class="ar" style="left:14px;top:30px">IB    0</div>
 <div class="f" style="left:81px;top:28px;width:69px;height:19px;background:#fff"></div><div class="ar ch" style="left:84px;top:31px">Bits</div><div class="r cb" style="left:132px;top:30px;right:auto"></div>
 <div class="ar" style="left:13px;top:55px">7</div><div class="ar" style="left:30px;top:55px">6</div><div class="ar" style="left:46px;top:55px">5</div><div class="ar" style="left:63px;top:55px">4</div><div class="ar" style="left:88px;top:55px">3</div><div class="ar" style="left:105px;top:55px">2</div><div class="ar" style="left:121px;top:55px">1</div><div class="ar" style="left:137px;top:55px">0</div>
 <div class="ck2" style="left:11px;top:70px"></div><div class="ck2" style="left:28px;top:70px"></div><div class="ck2" style="left:44px;top:70px"></div><div class="ck2" style="left:61px;top:70px"></div><div class="ck2" style="left:86px;top:70px"></div><div class="ck2" style="left:103px;top:70px"></div><div class="ck2" style="left:119px;top:70px"></div><div class="ck2" style="left:136px;top:70px"></div>
</div>

<!-- DBW windows -->
<div class="w" style="left:69px;top:465px"><div class="tb"></div><svg class="i" style="left:5px;top:2px"><use href="#mini"/></svg><div class="bt tt">DB7.DBW ...</div><div class="b mn" style="left:105px;top:3px"></div><div class="b mg" style="left:121px;top:3px"></div><div class="b cl" style="left:139px;top:3px"></div><div class="cli"></div><div class="a f" style="background:#fff"><div class="ar" style="left:-4px">DB7.DBW</div><div class="ar" style="right:2px">6</div></div><div class="c f" style="background:#fff"><div class="ar" style="left:3px">Char</div><div class="r cb"></div></div><div class="v f" style="background:#fff"><div class="ar" style="right:3px;top:3px">'ab'</div></div></div>

<div class="w" style="left:228px;top:468px"><div class="tb"></div><svg class="i" style="left:5px;top:2px"><use href="#mini"/></svg><div class="bt tt">DB7.DBW ...</div><div class="b mn" style="left:105px;top:3px"></div><div class="b mg" style="left:121px;top:3px"></div><div class="b cl" style="left:139px;top:3px"></div><div class="cli"></div><div class="a f" style="background:#fff"><div class="ar" style="left:-4px">DB7.DBW</div><div class="ar" style="right:2px">8</div></div><div class="c f" style="background:#fff"><div class="ar" style="left:3px">Char</div><div class="r cb"></div></div><div class="v f" style="background:#fff"><div class="ar" style="right:3px;top:3px">'cd'</div></div></div>

<div class="w" style="left:388px;top:468px"><div class="tb"></div><svg class="i" style="left:5px;top:2px"><use href="#mini"/></svg><div class="bt tt">DB7.DBW ...</div><div class="b mn" style="left:105px;top:3px"></div><div class="b mg" style="left:121px;top:3px"></div><div class="b cl" style="left:139px;top:3px"></div><div class="cli"></div><div class="a f" style="background:#fff"><div class="ar" style="left:-3px">DB7.DBW</div><div class="ar" style="right:1px">10</div></div><div class="c f" style="background:#fff"><div class="ar" style="left:3px">Char</div><div class="r cb"></div></div><div class="v f" style="background:#fff"><div class="ar" style="right:3px;top:3px">'ef'</div></div></div>

<div class="w" style="left:550px;top:469px"><div class="tb"></div><svg class="i" style="left:5px;top:2px"><use href="#mini"/></svg><div class="bt tt">DB7.DBW ...</div><div class="b mn" style="left:105px;top:3px"></div><div class="b mg" style="left:121px;top:3px"></div><div class="b cl" style="left:139px;top:3px"></div><div class="cli"></div><div class="a f" style="background:#fff"><div class="ar" style="left:-3px">DB7.DBW</div><div class="ar" style="right:1px">12</div></div><div class="c f" style="background:#fff"><div class="ar" style="left:3px">Char</div><div class="r cb"></div></div><div class="v f" style="background:#fff"><div class="ar" style="right:3px;top:3px">'gh'</div></div></div>

<div class="w" style="left:69px;top:560px"><div class="tb"></div><svg class="i" style="left:5px;top:2px"><use href="#mini"/></svg><div class="bt tt">DB7.DBW ...</div><div class="b mn" style="left:105px;top:3px"></div><div class="b mg" style="left:121px;top:3px"></div><div class="b cl" style="left:139px;top:3px"></div><div class="cli"></div><div class="a f" style="background:#fff"><div class="ar" style="left:-3px">DB7.DBW</div><div class="ar" style="right:1px">18</div></div><div class="c f" style="background:#fff"><div class="ar" style="left:3px">Char</div><div class="r cb"></div></div><div class="v f" style="background:#fff"><div class="ar" style="right:3px;top:3px">'AB'</div></div></div>

<div class="w" style="left:229px;top:562px"><div class="tb"></div><svg class="i" style="left:5px;top:2px"><use href="#mini"/></svg><div class="bt tt">DB7.DBW ...</div><div class="b mn" style="left:105px;top:3px"></div><div class="b mg" style="left:121px;top:3px"></div><div class="b cl" style="left:139px;top:3px"></div><div class="cli"></div><div class="a f" style="background:#fff"><div class="ar" style="left:-3px">DB7.DBW</div><div class="ar" style="right:1px">20</div></div><div class="c f" style="background:#fff"><div class="ar" style="left:3px">Char</div><div class="r cb"></div></div><div class="v f" style="background:#fff"><div class="ar" style="right:3px;top:3px">'CD'</div></div></div>

<div class="w" style="left:392px;top:565px"><div class="tb"></div><svg class="i" style="left:5px;top:2px"><use href="#mini"/></svg><div class="bt tt">DB7.DBW ...</div><div class="b mn" style="left:105px;top:3px"></div><div class="b mg" style="left:121px;top:3px"></div><div class="b cl" style="left:139px;top:3px"></div><div class="cli"></div><div class="a f" style="background:#fff"><div class="ar" style="left:-3px">DB7.DBW</div><div class="ar" style="right:1px">22</div></div><div class="c f" style="background:#fff"><div class="ar" style="left:3px">Char</div><div class="r cb"></div></div><div class="v f" style="background:#fff"><div class="ar" style="right:3px;top:3px">'EF'</div></div></div>

<div class="w" style="left:551px;top:565px"><div class="tb"></div><svg class="i" style="left:5px;top:2px"><use href="#mini"/></svg><div class="bt tt">DB7.DBW ...</div><div class="b mn" style="left:105px;top:3px"></div><div class="b mg" style="left:121px;top:3px"></div><div class="b cl" style="left:139px;top:3px"></div><div class="cli"></div><div class="a f" style="background:#fff"><div class="ar" style="left:-3px">DB7.DBW</div><div class="ar" style="right:1px">24</div></div><div class="c f" style="background:#fff"><div class="ar" style="left:3px">Char</div><div class="r cb"></div></div><div class="v f" style="background:#fff"><div class="ar" style="right:3px;top:3px">'GH'</div></div></div>

<!-- status bar -->
<div style="left:0;top:710px;width:1366px;height:20px;background:#d4d0c8;border-top:1px solid #fff"></div>
<div class="m" style="left:2px;top:714px">Press F1 to get Help.</div>
<svg class="i" style="left:503px;top:713px"><path d="M3 2c3-2 7-2 10 0 3 3 3 9 0 12-3 2-7 2-10 0-3-3-3-9 0-12z" fill="#fff" stroke="#000" stroke-width="1.500"/><path d="M4 5h8v6H4z" fill="#036"/><path d="M7 7h3v2H7z" fill="#0cc"/></svg>
<div style="left:536px;top:713px;width:60px;height:17px;box-shadow:inset 1px 1px #808080,inset -1px -1px #fff"></div>
<svg class="i" style="left:603px;top:713px"><path d="M8 .500L15.500 8 8 15.500.5 8z" fill="#fff" stroke="#000080"/><path d="M7 5h2v6H7z" fill="#000080"/></svg>
<div style="left:624px;top:713px;width:162px;height:17px;box-shadow:inset 1px 1px #808080,inset -1px -1px #fff"></div>
<div style="left:625px;top:714px;width:106px;height:15px;background:#0f0"></div>
<div class="m" style="left:626px;top:713px;color:#004000">RUN</div>
<div style="left:788px;top:713px;width:120px;height:17px;box-shadow:inset 1px 1px #808080,inset -1px -1px #fff"></div>
<div class="m" style="left:790px;top:714px;letter-spacing:-.4px">Abs &lt; 5.2</div>
<div style="left:910px;top:713px;width:186px;height:17px;box-shadow:inset 1px 1px #808080,inset -1px -1px #fff"></div>
<div style="left:1098px;top:713px;width:60px;height:17px;box-shadow:inset 1px 1px #808080,inset -1px -1px #fff"></div>
<div class="m" style="left:1100px;top:714px">Rd</div>
<div style="left:1160px;top:713px;width:54px;height:17px;box-shadow:inset 1px 1px #808080,inset -1px -1px #fff"></div>
<div style="left:1216px;top:713px;width:150px;height:17px;box-shadow:inset 1px 1px #808080,inset -1px -1px #fff"></div>

<!-- annotations -->
<svg style="left:0;top:0;width:1366px;height:730px;overflow:visible" viewBox="0 0 1366 730">
<defs><filter id="sh" x="-30%" y="-30%" width="160%" height="160%"><feGaussianBlur stdDeviation="3"/></filter></defs>
<g fill="#000" opacity=".25" filter="url(#sh)" transform="translate(3,4)">
<path d="M488 107L537 149 541 147 551 173 525 162 530 158z"/><path d="M448 203L525 211 523 204 547 220 518 227 524 219z"/><path d="M1159 402L1097 305 1103 301 1079 286 1083 314 1089 310z"/><path d="M857 549L738 541 738 532 712 542 738 555 738 547z"/><path d="M857 651L737 637 737 629 710 638 733 652 734 645z"/>
</g>
<g fill="#f00">
<path d="M488 107L537 149 541 147 551 173 525 162 530 158z"/>
<path d="M448 203L525 211 523 204 547 220 518 227 524 219z"/>
<path d="M1159 402L1097 305 1103 301 1079 286 1083 314 1089 310z"/>
</g>
<g fill="#00a8e8">
<path d="M857 549L738 541 738 532 712 542 738 555 738 547z"/>
<path d="M857 651L737 637 737 629 710 638 733 652 734 645z"/>
</g>
<rect x="765" y="224" width="143" height="142" rx="6" fill="none" stroke="#000" stroke-opacity=".2" stroke-width="3" filter="url(#sh)"/>
<rect x="765" y="224" width="143" height="142" rx="6" fill="none" stroke="#f01020" stroke-width="2"/>
</svg>
</body></html>
